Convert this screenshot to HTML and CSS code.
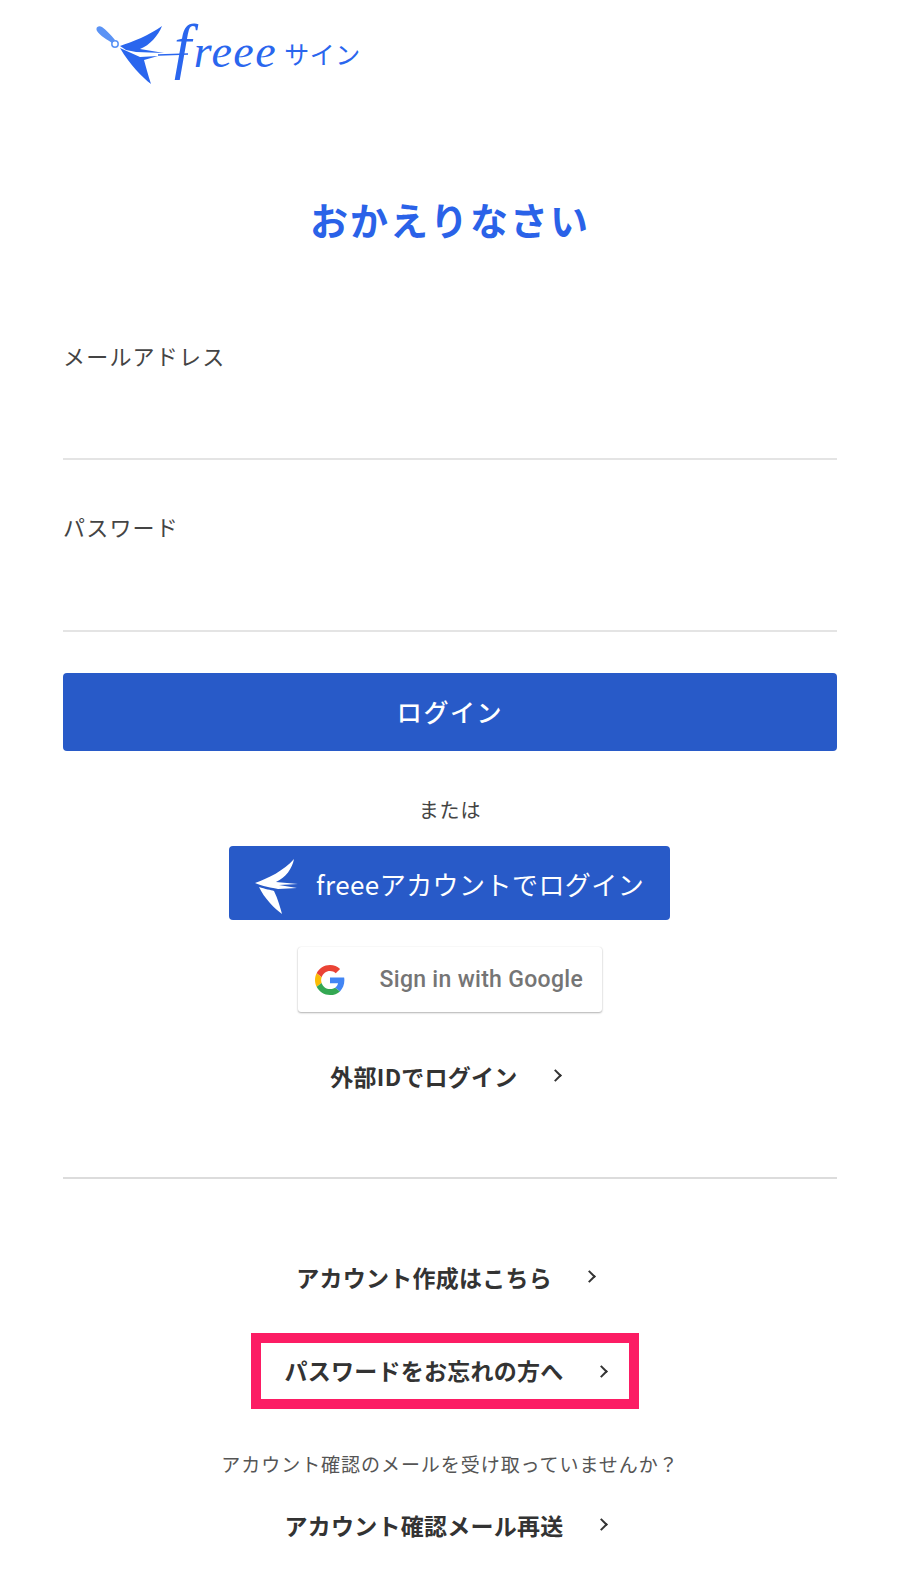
FILE: index.html
```html
<!DOCTYPE html>
<html lang="ja">
<head>
    <meta charset="UTF-8">
    <meta name="viewport" content="width=device-width, initial-scale=1.0">
    <title>freee サイン</title>
    <link rel="stylesheet" href="styles.css">
</head>
<body>
    <div class="container">
        <header class="logo">
            <svg class="logo-bird" width="92" height="62" viewBox="0 0 92 62">
                <path d="M1 6 C-1 2 3 0 6 2 C10 5 15 10 19 15 L16 18 C12 15 4 11 1 6 Z" fill="#5b93f5"/>
                <circle cx="19" cy="19" r="3.2" fill="none" stroke="#5b93f5" stroke-width="1.5"/>
                <path d="M24 21 C36 17 54 10 66 1 C62 11 54 20 44 24 L68 28 L40 27 L30 25 Z" fill="#2a66ee"/>
                <path d="M24 23 L44 32 L62 31 L48 35 C50 42 52 50 55 59 C46 52 34 40 24 23 Z" fill="#2a66ee"/>
                <path d="M62 30 L92 29" stroke="#2a66ee" stroke-width="1.6" fill="none"/>
            </svg>
            <span class="logo-word"><span class="logo-f">f</span>reee</span>
            <span class="logo-sign">サイン</span>
        </header>

        <h1 class="title">おかえりなさい</h1>

        <form class="login-form">
            <div class="field">
                <label>メールアドレス</label>
            </div>
            <div class="field field-password">
                <label>パスワード</label>
            </div>
            <button type="button" class="login-button">ログイン</button>
        </form>

        <p class="or">または</p>

        <a class="freee-button">
            <svg class="freee-bird" width="44" height="56" viewBox="0 0 44 56">
                <path d="M0 24 C12 20 30 11 39 0 C37 10 31 18 21 23 L43 25 L24 26 L42 29 L23 30 C18 29 6 27 0 24 Z" fill="#fff"/>
                <path d="M4 28 C10 30 16 31 19 32 C23 40 25 48 27 55 C20 50 9 39 4 28 Z" fill="#fff"/>
            </svg>
            <span>freeeアカウントでログイン</span>
        </a>

        <a class="google-button">
            <svg width="30" height="30" viewBox="0 0 48 48">
                <path fill="#ea4335" d="M24 9.5c3.500 0 6.700 1.200 9.200 3.600l6.900-6.900C35.900 2.400 30.500 0 24 0 14.600 0 6.500 5.400 2.600 13.200l8 6.200C12.500 13.600 17.800 9.500 24 9.500z"/>
                <path fill="#4285f4" d="M47 24.500c0-1.600-.1-3.100-.4-4.500H24v9h12.900c-.6 3-2.200 5.500-4.700 7.200l7.700 6C44.400 38 47 31.800 47 24.500z"/>
                <path fill="#fbbc05" d="M10.600 28.600c-.5-1.400-.8-3-.8-4.600s.3-3.200.8-4.600l-8-6.200C.900 16.500 0 20.100 0 24s.9 7.500 2.600 10.800l8-6.200z"/>
                <path fill="#34a853" d="M24 48c6.500 0 11.900-2.100 15.900-5.800l-7.700-6c-2.200 1.400-4.900 2.300-8.200 2.300-6.200 0-11.500-4.100-13.400-9.900l-8 6.200C6.500 42.600 14.600 48 24 48z"/>
            </svg>
            <span>Sign in with Google</span>
        </a>

        <a class="link-row external"><span>外部IDでログイン</span><i class="chevron"></i></a>

        <hr class="divider">

        <a class="link-row signup"><span>アカウント作成はこちら</span><i class="chevron"></i></a>

        <div class="highlight">
            <a class="link-row"><span>パスワードをお忘れの方へ</span><i class="chevron"></i></a>
        </div>

        <p class="note">アカウント確認のメールを受け取っていませんか？</p>

        <a class="link-row resend"><span>アカウント確認メール再送</span><i class="chevron"></i></a>
    </div>
</body>
</html>
```

FILE: styles.css
```css
* {
    margin: 0;
    padding: 0;
    box-sizing: border-box;
}

body {
    font-family: "Noto Sans CJK JP", "Noto Sans", sans-serif;
    background: #fff;
    color: #333;
    height: 1570px;
    overflow: hidden;
}

.container {
    width: 774px;
    margin-left: 63px;
    display: flex;
    flex-direction: column;
    align-items: center;
}

.logo {
    align-self: flex-start;
    display: flex;
    align-items: center;
    height: 62px;
    margin-top: 25px;
    margin-left: 33px;
    color: #2a66ee;
}

.logo-bird {
    flex-shrink: 0;
}

.logo-word {
    font-family: "Liberation Serif", serif;
    font-style: italic;
    font-size: 46px;
    line-height: 62px;
    margin-left: -14px;
    margin-top: -8px;
    letter-spacing: 1.5px;
}

.logo-f {
    font-size: 62px;
    line-height: 40px;
    margin-right: 1px;
}

.logo-sign {
    font-size: 25px;
    margin-left: 7px;
    margin-top: -6px;
    letter-spacing: 0.5px;
}

.title {
    font-size: 38px;
    line-height: 56px;
    letter-spacing: 2px;
    font-weight: 700;
    color: #2a62e8;
    margin-top: 104px;
}

.login-form {
    width: 100%;
    margin-top: 93px;
}

.field {
    height: 121px;
    border-bottom: 2px solid #e4e4e4;
}

.field-password {
    height: 122px;
    margin-top: 51px;
}

.field label {
    display: block;
    font-size: 22px;
    line-height: 32px;
    letter-spacing: 1.2px;
    color: #444;
    margin-top: -1px;
}

.login-button {
    display: block;
    width: 100%;
    height: 78px;
    margin-top: 41px;
    padding-bottom: 3px;
    background: #285ac8;
    color: #fff;
    font-family: inherit;
    font-size: 25px;
    font-weight: 500;
    letter-spacing: 1.6px;
    border: none;
    border-radius: 4px;
}

.or {
    font-size: 20px;
    line-height: 30px;
    margin-top: 44px;
    letter-spacing: 0.9px;
    color: #444;
}

.freee-button {
    display: flex;
    align-items: center;
    width: 441px;
    height: 74px;
    margin-top: 21px;
    margin-right: 1px;
    padding-left: 26px;
    gap: 17px;
    background: #285ac8;
    color: #fff;
    font-size: 26px;
    letter-spacing: 0.45px;
    border-radius: 4px;
}

.freee-bird {
    margin-top: 8px;
    flex-shrink: 0;
}

.google-button {
    display: flex;
    align-items: center;
    width: 304px;
    height: 65px;
    margin-top: 27px;
    margin-right: 1px;
    padding-left: 17px;
    gap: 35px;
    background: #fff;
    color: #757575;
    font-family: Roboto, sans-serif;
    font-size: 23px;
    font-weight: 500;
    letter-spacing: 0.3px;
    border-radius: 3px;
    box-shadow: 0 1px 2px rgba(0, 0, 0, 0.3), 0 0 1px rgba(0, 0, 0, 0.15);
}

.link-row {
    display: flex;
    align-items: center;
    gap: 33px;
    padding-right: 10px;
    font-size: 23px;
    line-height: 34px;
    font-weight: 700;
    letter-spacing: 0.25px;
    color: #333;
}

.chevron {
    width: 9px;
    height: 9px;
    margin-top: -2px;
    border-top: 2px solid #333;
    border-right: 2px solid #333;
    transform: rotate(45deg);
}

.external {
    margin-top: 47px;
}

.divider {
    width: 100%;
    border: none;
    border-top: 2px solid #dcdcdc;
    margin-top: 84px;
}

.signup {
    margin-top: 81px;
}

.highlight {
    width: 388px;
    height: 76px;
    border: 10px solid #fc1c64;
    margin-top: 39px;
    margin-left: -10px;
    padding-bottom: 3px;
    display: flex;
    align-items: center;
    justify-content: center;
}

.highlight .link-row {
    padding-right: 0;
}

.highlight .chevron {
    margin-top: 3px;
}

.note {
    font-size: 19px;
    line-height: 28px;
    margin-top: 41px;
    letter-spacing: 0.95px;
    color: #555;
}

.resend {
    margin-top: 30px;
}
```
